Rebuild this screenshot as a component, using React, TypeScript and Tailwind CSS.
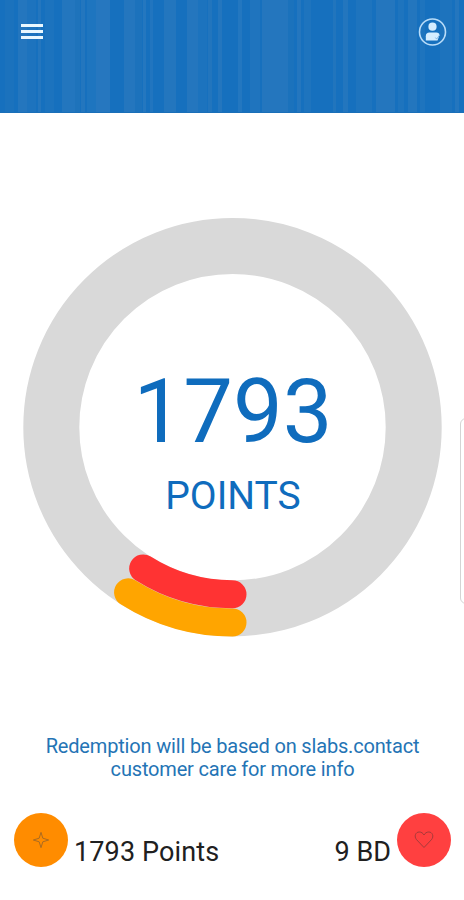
const TOTAL_POINTS = 20000;
const points = 1793;

// [left, width, colour] of each band in the header
const stripes: [number, number, string][] = [
  [5, 9, "#1b72bd"],
  [18, 9, "#2476be"],
  [27, 9, "#1d73be"],
  [38, 3, "#2476be"],
  [45, 9, "#1c73be"],
  [62, 13, "#2376be"],
  [75, 5, "#1e73bb"],
  [81, 4, "#2376be"],
  [87, 9, "#1e75bf"],
  [96, 14, "#2677bf"],
  [124, 11, "#2476be"],
  [135, 7, "#1c72bc"],
  [143, 3, "#2477bf"],
  [150, 3, "#2175bf"],
  [164, 12, "#2376be"],
  [187, 11, "#2476be"],
  [198, 9, "#1c73be"],
  [208, 4, "#2275bd"],
  [218, 4, "#2476be"],
  [238, 4, "#2377c0"],
  [250, 10, "#1f74be"],
  [262, 26, "#2476be"],
  [288, 6, "#1b72bc"],
  [297, 4, "#2476be"],
  [304, 7, "#1e74be"],
  [333, 3, "#2175bd"],
  [343, 5, "#2376be"],
  [356, 16, "#1e74be"],
  [376, 19, "#2476be"],
  [398, 6, "#1e74be"],
  [408, 9, "#2376be"],
  [420, 5, "#1e74be"],
  [440, 12, "#1d73bd"],
  [455, 4, "#2476be"],
];

const Header = () => {
  return (
    <header className="relative flex h-[113px] items-start justify-between overflow-hidden border-b border-[#1a6fb8] bg-[#1670be] pl-[21px] pr-[17px]">
      <svg className="absolute inset-0" width="464" height="113" aria-hidden="true">
        {stripes.map(([x, w, fill]) => (
          <rect key={x} x={x} width={w} height="113" fill={fill} />
        ))}
      </svg>
      <button className="relative mt-6 flex flex-col gap-[3px]" aria-label="Open menu">
        <span className="h-[3px] w-[22px] bg-[#e9f8ff]" />
        <span className="h-[3px] w-[22px] bg-[#e9f8ff]" />
        <span className="h-[3px] w-[22px] bg-[#e9f8ff]" />
      </button>
      <button className="relative mt-[17px]" aria-label="Profile">
        <svg width="30" height="30" viewBox="0 0 30 30" fill="#d5edff">
          <circle cx="15.500" cy="15" r="13" fill="none" stroke="#b9dcf8" strokeWidth="1.6" />
          <circle cx="15.5" cy="9.7" r="4.1" />
          <path d="M8.8 23.5v-4.2q0-3.7 3.7-3.700h6.800q3.200 0 3.200 2.700l-2 5.200z" />
          <path d="M18.300 20.500l1.400 1.600 2.600-3.800" fill="none" stroke="#6fabdf" strokeWidth="0.8" />
        </svg>
      </button>
    </header>
  );
};

// Arc that starts at the bottom of the ring and runs clockwise
const arcPath = (r: number) => {
  const angle = (points / TOTAL_POINTS) * Math.PI * 2;
  const x = 210.5 - r * Math.sin(angle);
  const y = 210 + r * Math.cos(angle);
  return `M210.500 ${210 + r}A${r} ${r} 0 0 1 ${x} ${y}`;
};

const PointsRing = () => {
  return (
    <div className="mx-auto mt-[104px] grid h-[420px] w-[420px] shrink-0 place-items-center">
      <svg className="col-start-1 row-start-1" width="420" height="420" viewBox="0 0 420 420" fill="none">
        <circle cx="210.5" cy="210.2" r="181.2" stroke="#d9d9d9" strokeWidth="56" />
        <path d={arcPath(195.5)} stroke="#ffa500" strokeWidth="28" strokeLinecap="round" />
        <path d={arcPath(167.3)} stroke="#ff3333" strokeWidth="28" strokeLinecap="round" />
      </svg>
      <div className="col-start-1 row-start-1 flex flex-col items-center pl-[2px] pt-[26px] text-[#0f6cbd]">
        <p className="text-[88.5px] leading-[104px]">{points}</p>
        <p className="mt-2 text-[39px] leading-[48px]">POINTS</p>
      </div>
    </div>
  );
};

const Footer = () => {
  return (
    <footer className="mt-8 flex justify-between pl-3.5 pr-[13px] text-[27px] leading-8 text-[#202020]">
      <div className="flex gap-1.5">
        <div className="flex size-[54px] items-center justify-center rounded-full bg-[#ff8c00]">
          <svg width="18" height="18" viewBox="0 0 20 20" fill="none" stroke="#a86a22" strokeWidth="1.1">
            <path d="M10 1.5L12 8L18.5 10L12 12L10 18.5L8 12L1.5 10L8 8Z" />
          </svg>
        </div>
        <p className="mt-[23px] tracking-[0.12px]">{points} Points</p>
      </div>
      <div className="flex gap-1.5">
        <p className="mt-[23px]">9 BD</p>
        <div className="flex size-[54px] items-center justify-center rounded-full bg-[#ff4040]">
          <svg width="20" height="20" viewBox="0 0 20 20" fill="none" stroke="#a63a3a" strokeWidth="1">
            <path d="M10 17.500L2.600 9.700C-0.200 6.400 1.500 2 5.200 2C7.500 2 9 3.200 10 5C11 3.200 12.500 2 14.800 2C18.500 2 20.200 6.400 17.400 9.700Z" />
          </svg>
        </div>
      </div>
    </footer>
  );
};

const App = () => {
  return (
    <main className="relative flex h-[900px] w-[464px] flex-col overflow-hidden bg-white font-['Roboto',sans-serif]">
      <Header />
      <PointsRing />
      <p className="mt-[98px] pl-px text-center text-[20px] leading-[23px] tracking-[-0.17px] text-[#2474b5]">
        Redemption will be based on slabs.contact
        <br />
        customer care for more info
      </p>
      <Footer />
      {/* Edge panel handle hanging over the right side of the screen */}
      <div className="absolute -right-3 top-[418px] h-[186px] w-4 rounded-[6px] border border-[#d4d4d4] bg-white" />
    </main>
  );
};

export default App;
